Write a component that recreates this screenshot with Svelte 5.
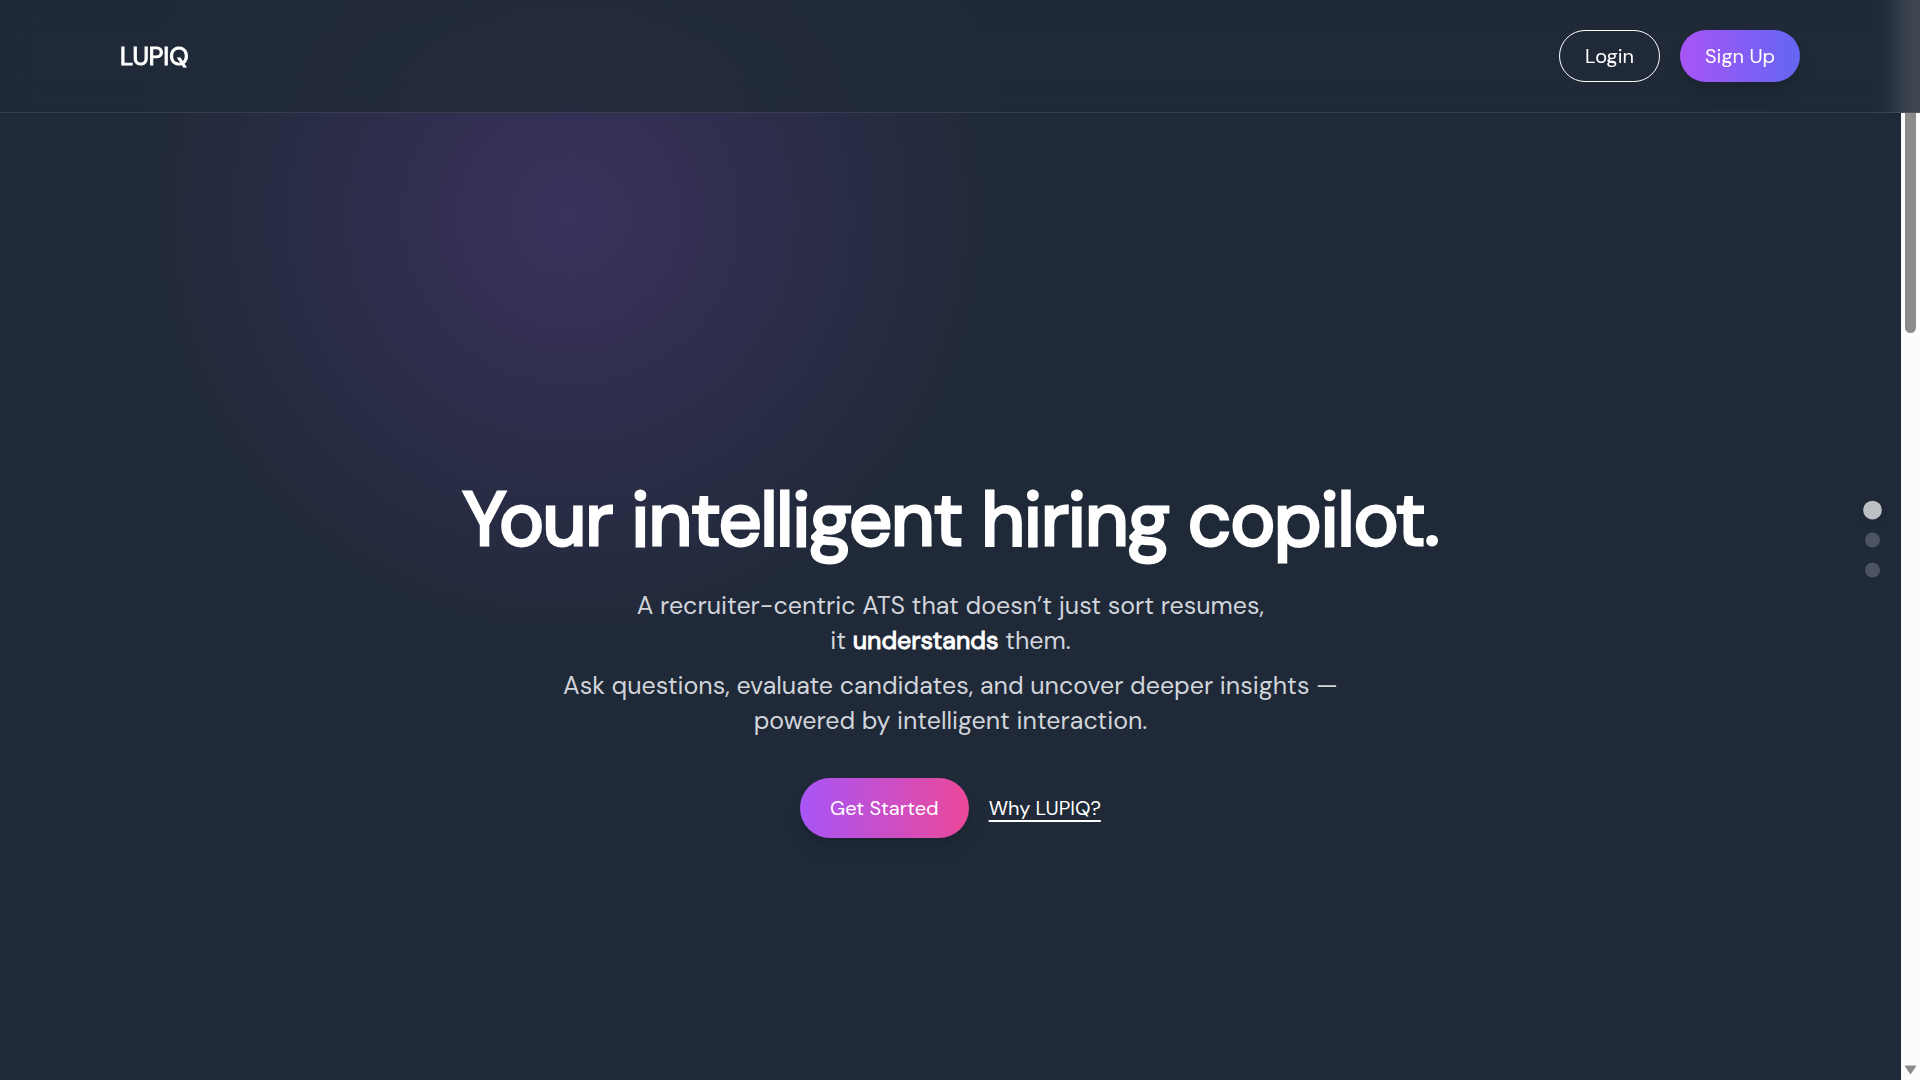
<script>
  const sections = ['Intro', 'Features', 'Contact'];
  let active = $state(0);
</script>

<header class="topbar">
  <a class="logo" href="#home">LUPIQ</a>
  <nav class="account" aria-label="Account">
    <button class="pill outline" type="button">Login</button>
    <button class="pill signup" type="button">Sign Up</button>
  </nav>
</header>

<div class="page">
  <main class="hero" id="home">
    <h1>Your intelligent hiring copilot.</h1>
    <p class="lead">
      A recruiter-centric ATS that doesn’t just sort resumes,<br />
      it <strong>understands</strong> them.
    </p>
    <p class="lead">
      Ask questions, evaluate candidates, and uncover deeper insights —<br />
      powered by intelligent interaction.
    </p>
    <div class="actions">
      <button class="pill start" type="button">Get Started</button>
      <a class="why" href="#why">Why LUPIQ?</a>
    </div>
  </main>

  <div class="scrollbar" aria-hidden="true">
    <div class="thumb"></div>
    <svg class="arrow" viewBox="0 0 13 10"><path d="M6.500 9.500 12 1.500Q12.300 .5 11.500 .5H1.500Q.7 .5 1 1.500Z" /></svg>
  </div>
</div>

<nav class="dots" aria-label="Sections">
  {#each sections as name, i}
    <button
      type="button"
      class="dot"
      class:active={active === i}
      aria-label={name}
      onclick={() => (active = i)}
    ></button>
  {/each}
</nav>

<style>
  :global(body) {
    background: #1f2937;
    color: #fff;
    font-family: 'DM Sans', Inter, 'Liberation Sans', sans-serif;
    font-size: 20px;
  }

  .topbar {
    position: fixed;
    inset: 0 0 auto;
    z-index: 2;
    display: flex;
    align-items: center;
    justify-content: space-between;
    padding: 30px 120px;
    background:
      linear-gradient(
        to left,
        rgba(255, 255, 255, 0.14) 0,
        rgba(255, 255, 255, 0.12) 12px,
        rgba(255, 255, 255, 0.08) 21px,
        rgba(255, 255, 255, 0.02) 33px,
        transparent 48px
      ),
      rgba(31, 41, 55, 0.8);
    backdrop-filter: blur(15px);
    border-bottom: 1px solid rgba(255, 255, 255, 0.1);
  }

  .logo {
    color: #fff;
    font-size: 25px;
    -webkit-text-stroke: 1px #fff;
    text-decoration: none;
  }

  .account {
    display: flex;
    gap: 20px;
  }

  .pill {
    box-sizing: border-box;
    border: 0;
    border-radius: 999px;
    color: #fff;
    font: inherit;
    line-height: 30px;
    cursor: pointer;
  }

  .outline {
    padding: 10px 25px;
    border: 1px solid #fff;
    background: transparent;
  }

  .signup {
    padding: 11px 25px;
    background: linear-gradient(to right, #a855f7, #6366f1);
    box-shadow: 0 12px 19px -4px rgba(0, 0, 0, 0.1), 0 5px 8px -5px rgba(0, 0, 0, 0.1);
  }

  .page {
    display: flex;
    min-height: 100vh;
  }

  .hero {
    box-sizing: border-box;
    flex: 1;
    display: flex;
    flex-direction: column;
    align-items: center;
    justify-content: center;
    padding: 238px 30px 0;
    text-align: center;
    background: radial-gradient(circle at 30% 20%, rgba(168, 85, 247, 0.2), transparent 28%);
  }

  h1 {
    margin: 0 0 28px;
    font-size: 76px;
    font-weight: 400;
    line-height: 80px;
    letter-spacing: -0.015em;
    -webkit-text-stroke: 3px #fff;
    paint-order: stroke fill;
  }

  .lead {
    margin: 0 0 10px;
    color: #d1d5db;
    font-size: 25px;
    line-height: 35px;
  }

  .lead strong {
    color: #fff;
    font-weight: 400;
    -webkit-text-stroke: 1px #fff;
  }

  .actions {
    display: flex;
    align-items: center;
    gap: 20px;
    margin-top: 30px;
  }

  .start {
    padding: 15px 30px;
    background: linear-gradient(to right, #a855f7, #ec4899);
    box-shadow: 0 12px 19px -4px rgba(0, 0, 0, 0.1), 0 5px 8px -5px rgba(0, 0, 0, 0.1);
  }

  .why {
    color: #fff;
    text-decoration: underline;
    text-decoration-thickness: 2px;
    text-underline-offset: 5px;
    text-decoration-skip-ink: none;
  }

  /* Starts under the 113px top bar, so only its lower part is seen. */
  .scrollbar {
    box-sizing: border-box;
    display: flex;
    flex-direction: column;
    align-items: center;
    width: 19px;
    margin-top: 113px;
    padding-bottom: 5px;
    background: #fcfcfc;
  }

  .arrow {
    width: 13px;
    height: 10px;
    fill: #8b8b8b;
  }

  .thumb {
    width: 11px;
    height: 220px;
    margin-bottom: auto;
    border-radius: 0 0 6px 6px;
    background: #8b8b8b;
  }

  .dots {
    position: fixed;
    top: 50%;
    right: 40px;
    z-index: 1;
    display: flex;
    flex-direction: column;
    gap: 15px;
    transform: translateY(-50%);
  }

  .dot {
    width: 15px;
    height: 15px;
    padding: 0;
    border: 0;
    border-radius: 50%;
    background: #6b7280;
    opacity: 0.6;
    cursor: pointer;
  }

  .dot.active {
    background: #fff;
    opacity: 0.7;
    transform: scale(1.25);
    box-shadow: 0 5px 8px -1px rgba(0, 0, 0, 0.1);
  }
</style>
